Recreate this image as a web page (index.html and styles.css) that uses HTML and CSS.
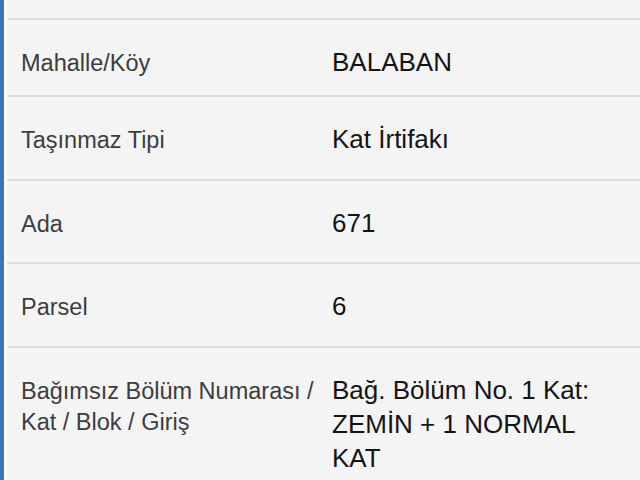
FILE: index.html
```html
<!DOCTYPE html>
<html lang="tr">
<head>
<meta charset="utf-8">
<link rel="stylesheet" href="styles.css">
</head>
<body>
<div class="page">
  <div class="accent"></div>
  <div class="gutter"></div>
  <div class="list">
    <div class="stub"></div>
    <div class="row row--first">
      <div class="label">Mahalle/Köy</div>
      <div class="value">BALABAN</div>
    </div>
    <div class="row">
      <div class="label">Taşınmaz Tipi</div>
      <div class="value">Kat İrtifakı</div>
    </div>
    <div class="row">
      <div class="label">Ada</div>
      <div class="value">671</div>
    </div>
    <div class="row">
      <div class="label">Parsel</div>
      <div class="value">6</div>
    </div>
    <div class="row row--last">
      <div class="label">Bağımsız Bölüm Numarası / Kat / Blok / Giriş</div>
      <div class="value">Bağ. Bölüm No. 1 Kat: ZEMİN + 1 NORMAL KAT</div>
    </div>
  </div>
</div>
</body>
</html>
```

FILE: styles.css
```css
html, body {
  margin: 0;
  padding: 0;
  height: 100%;
  overflow: hidden;
  background: #f4f4f4;
}
body {
  font-family: "Liberation Sans", Arial, Helvetica, sans-serif;
}
.page {
  display: flex;
  min-height: 480px;
}
.accent {
  width: 4px;
  flex: none;
  background: #3f75b3;
}
.gutter {
  width: 3px;
  flex: none;
  background: #fbfbfb;
}
.list {
  flex: 1;
  display: flex;
  flex-direction: column;
}
.stub {
  height: 18px;
  border-bottom: 2px solid #dddddd;
}
.row {
  display: flex;
  align-items: baseline;
  padding: 26px 20px 22px 14px;
  border-bottom: 2px solid #dddddd;
}
.row--first {
  padding-bottom: 15px;
}
.row--last {
  border-bottom: none;
}
.label {
  width: 311px;
  flex: none;
  font-size: 23.5px;
  line-height: 1.3;
  color: #3d3d3d;
}
.value {
  flex: 1;
  font-size: 26px;
  line-height: 1.3;
  color: #141414;
}
```
